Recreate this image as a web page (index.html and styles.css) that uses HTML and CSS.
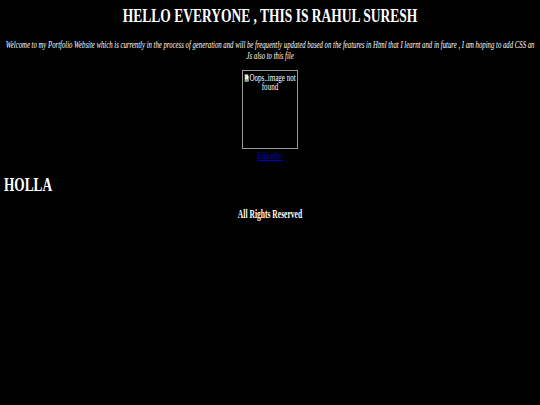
FILE: index.html
```html
<!DOCTYPE html>
<html lang="en">
<head>
<meta charset="utf-8">
<title>Rahul Suresh</title>
<link rel="stylesheet" href="styles.css">
</head>
<body>
<h1 class="title">HELLO EVERYONE , THIS IS RAHUL SURESH</h1>
<div class="intro">
  <p class="intro-text">Welcome to my Portfolio Website which is currently in the process of generation and will be frequently updated based on the features in Html that I learnt and in future , I am hoping to add CSS an Js also to this file</p>
</div>
<div class="photo">
  <div class="photo-box">
    <span class="photo-alt"><svg class="broken" viewBox="0 0 8 9" width="7" height="8"><path d="M0.5 0.5h5l2 2v6h-7z" fill="#f4f4f4" stroke="#9a9a9a" stroke-width="0.6"/><path d="M1 7.5l2-2.5 1.5 1.5 1-1 1.5 2z" fill="#4a9a3a"/><circle cx="2.2" cy="2.6" r="0.8" fill="#5aa0e0"/></svg>Oops..image not found</span>
  </div>
  <a class="link" href="#">Linkedin</a>
</div>
<h2 class="holla">HOLLA</h2>
<p class="footer">All Rights Reserved</p>
</body>
</html>
```
FILE: styles.css
```css
html {
  overflow: hidden;
  background: #000;
}
body {
  margin: 0;
  background: #000;
  color: #fff;
  font-family: "Liberation Serif", "Times New Roman", serif;
}
.title {
  margin: 6px 0 0;
  font-size: 18px;
  line-height: 20px;
  font-weight: bold;
  text-align: center;
  transform: scaleX(0.75);
}
.intro {
  margin: 13px 5px 0;
  width: 530px;
}
.intro-text {
  margin: 0;
  width: 865px;
  font-size: 11px;
  line-height: 11px;
  font-style: italic;
  text-align: center;
  transform: scaleX(0.613);
  transform-origin: 0 0;
}
.photo {
  margin-top: 9px;
  display: flex;
  flex-direction: column;
  align-items: center;
}
.photo-box {
  width: 54px;
  height: 77px;
  border: 1px solid #9a9a9a;
  box-sizing: content-box;
  overflow: hidden;
}
.photo-alt {
  display: block;
  width: 84px;
  margin-left: -15px;
  font-size: 11px;
  line-height: 9px;
  text-align: center;
  transform: scaleX(0.64);
  padding-top: 2px;
}
.broken {
  vertical-align: -1px;
  margin-right: 1px;
}
.link {
  margin-top: 2px;
  font-size: 10px;
  line-height: 10px;
  color: #0000c0;
  transform: scaleX(0.7);
}
.holla {
  margin: 14px 0 0 4px;
  font-size: 18px;
  line-height: 20px;
  font-weight: bold;
  transform: scaleX(0.74);
  transform-origin: 0 0;
}
.footer {
  margin: 12px 0 0;
  font-size: 12px;
  line-height: 14px;
  font-weight: bold;
  text-align: center;
  transform: scaleX(0.63);
}
```
